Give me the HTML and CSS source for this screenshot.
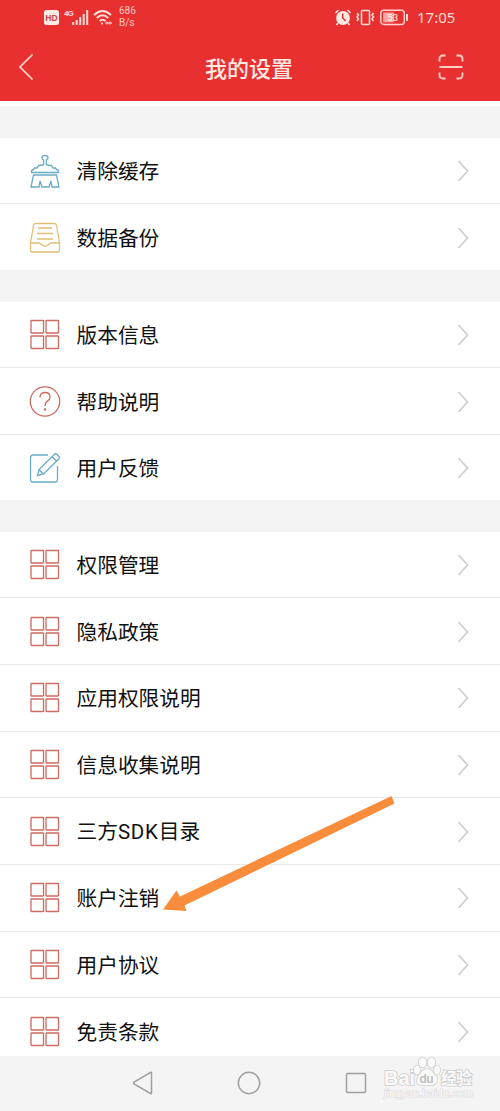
FILE: index.html
```html
<!DOCTYPE html>
<html lang="zh-CN">
<head>
<meta charset="utf-8">
<title>我的设置</title>
<link rel="stylesheet" href="styles.css">
</head>
<body>
<svg class="defs" aria-hidden="true">
  <symbol id="grid" viewBox="0 0 32 32"><rect x="2" y="1.500" width="12.500" height="12.500" rx=".5"/><rect x="17" y="1.500" width="12.500" height="12.500" rx=".5"/><rect x="2" y="17" width="12.500" height="12.500" rx=".5"/><rect x="17" y="17" width="12.500" height="12.500" rx=".5"/></symbol>
  <symbol id="arrow" viewBox="0 0 14 24"><path d="M2.500 2 11.500 12 2.500 22"/></symbol>
</svg>
<main class="phone">
  <header class="header">
    <div class="status">
      <svg class="hd" width="15" height="15" viewBox="0 0 15 15"><rect width="15" height="15" rx="2.500" fill="#ffeae5"/><text x="7.500" y="11" text-anchor="middle" class="hd-text">HD</text></svg>
      <svg class="signal" width="25" height="18" viewBox="0 0 25 18"><text x="0" y="8" class="net-text">4G</text><path d="M9.200 14v3M12.700 12v5M16.200 9v8M19.700 6v11M23.200 2v15" stroke="#ffdcd6" stroke-width="2"/></svg>
      <svg class="wifi" width="21" height="17" viewBox="0 0 21 17" fill="none" stroke="#ffdfd9" stroke-width="2"><path d="M1 6Q9.500-2 18 6M3.800 9Q9.500 3.500 15.200 9M6.500 12Q9.500 9.500 12.500 12"/><circle cx="9" cy="14.500" r="1" fill="#ffdfd9" stroke="none"/><path d="M12 14h7M14 12.500v3M17 12.500v3" stroke-width="1"/></svg>
      <div class="speed"><span>686</span><span>B/s</span></div>
      <div class="status-right">
        <svg width="18" height="17" viewBox="0 0 18 17"><circle cx="9" cy="9" r="6.900" fill="#ffeae5"/><path d="m1.500 4 3-3M13.500 1l3 3M4 14l-1.500 2M14 14l1.500 2" stroke="#ffeae5" stroke-width="1.500"/><path d="M8.700 4.500V9l3 3" fill="none" stroke="#e93030" stroke-width="1.500"/></svg>
        <svg class="vibrate" width="19" height="17" viewBox="0 0 19 17" fill="none" stroke="#ffdfd9" stroke-width="1.500"><rect x="5.500" y="1.500" width="8" height="14" rx="1"/><path d="m1 4 1.500 2L1 8l1.500 2L1 12M17.500 4 16 6l1.500 2-1.500 2 1.500 2"/></svg>
        <svg class="battery" width="29" height="17" viewBox="0 0 29 17"><rect x=".8" y="1.300" width="23.500" height="14.200" rx="3" fill="none" stroke="#ffd4ce" stroke-width="1.400"/><rect x="3" y="3.500" width="11" height="9.800" fill="#f7a6a0"/><path d="M27 5v7" stroke="#ffd4ce" stroke-width="2"/><text x="12.700" y="12.300" text-anchor="middle" class="battery-text">53</text></svg>
        <span class="time">17:05</span>
      </div>
    </div>
    <div class="titlebar">
      <svg width="16" height="28" viewBox="0 0 16 28" fill="none" stroke="#ffd9c9" stroke-width="1.700"><path d="M14.500 1.500 2 14l12.500 12.500"/></svg>
      <h1>我的设置</h1>
      <svg width="26" height="26" viewBox="0 0 26 26" fill="none" stroke="#ffcfc4" stroke-width="1.800"><path d="M1.500 7.500V5q0-3.500 3.500-3.500h2.500M18.500 1.500H21q3.500 0 3.500 3.500v2.500M1.500 18.500V21q0 3.500 3.500 3.500h2.500M18.500 24.500H21q3.500 0 3.500-3.500v-2.500M1.500 13h23"/></svg>
    </div>
  </header>
  <section class="group first">
    <div class="row"><svg class="icon blue" viewBox="0 0 32 34"><path d="M13 3.500q0-2 3-2t3 2q0 1.500-1.600 2.500v4.500q1 1 5.100 1l1.500 2.500h2.500q.5 2 3 2.500v2H2.500v-2q2.500-.5 3-2.500H8l1.500-2.500q4.100 0 5.100-1V6Q13 5 13 3.500ZM4.500 21 2 33h8l1-6 2 6h7l2-6 1 6h7l-2.500-12Z"/></svg><span>清除缓存</span><svg class="chevron"><use href="#arrow"/></svg></div>
    <div class="row"><svg class="icon yellow" viewBox="0 0 32 32"><path d="M1.500 21 4.500 3.500Q4.800 1.500 6.500 1.500h19q1.700 0 2 2L30.500 21M9 6h14M8 11.500h16M8 17h16M1.500 21h8.500q1 0 1.800 1.200L16 24.500l4.200-2.300Q21 21 22 21h8.500v7q0 2-2 2h-25q-2 0-2-2z"/></svg><span>数据备份</span><svg class="chevron"><use href="#arrow"/></svg></div>
  </section>
  <section class="group second">
    <div class="row"><svg class="icon red"><use href="#grid"/></svg><span>版本信息</span><svg class="chevron"><use href="#arrow"/></svg></div>
    <div class="row"><svg class="icon red" viewBox="0 0 32 32"><circle cx="16" cy="15.500" r="14.700"/><path d="M11 11.500q0-5 5-5t5 4.500q0 2.500-2.800 4.400Q16 16.900 16 20"/><circle cx="16" cy="23.500" r=".6"/></svg><span>帮助说明</span><svg class="chevron"><use href="#arrow"/></svg></div>
    <div class="row"><svg class="icon blue" viewBox="0 0 32 32"><path d="M19 3H4Q1.500 3 1.500 5.500v22Q1.500 30 4 30h22q2.500 0 2.500-2.500V14M8.500 23.500l1.600-6L25.500 2.200q1.200-1 2.500.1L30 4.500q1 1.200 0 2.300L14.500 22zM10 17.500l4.500 4.500M23 4.800l4.500 4.500"/></svg><span>用户反馈</span><svg class="chevron"><use href="#arrow"/></svg></div>
  </section>
  <section class="group third">
    <div class="row"><svg class="icon red"><use href="#grid"/></svg><span>权限管理</span><svg class="chevron"><use href="#arrow"/></svg></div>
    <div class="row"><svg class="icon red"><use href="#grid"/></svg><span>隐私政策</span><svg class="chevron"><use href="#arrow"/></svg></div>
    <div class="row"><svg class="icon red"><use href="#grid"/></svg><span>应用权限说明</span><svg class="chevron"><use href="#arrow"/></svg></div>
    <div class="row"><svg class="icon red"><use href="#grid"/></svg><span>信息收集说明</span><svg class="chevron"><use href="#arrow"/></svg></div>
    <div class="row"><svg class="icon red"><use href="#grid"/></svg><span>三方<span class="latin">SDK</span>目录</span><svg class="chevron"><use href="#arrow"/></svg></div>
    <div class="row"><svg class="icon red"><use href="#grid"/></svg><span>账户注销</span><svg class="chevron"><use href="#arrow"/></svg></div>
    <div class="row"><svg class="icon red"><use href="#grid"/></svg><span>用户协议</span><svg class="chevron"><use href="#arrow"/></svg></div>
    <div class="row"><svg class="icon red"><use href="#grid"/></svg><span>免责条款</span><svg class="chevron"><use href="#arrow"/></svg></div>
  </section>
  <nav class="nav">
    <svg width="21" height="24" viewBox="0 0 21 24"><path d="M19.500 1.500v21q0 .5-1 0L2 13q-1-1 0-2l16.500-9.500q1-.5 1 0Z"/></svg>
    <svg width="24" height="24" viewBox="0 0 24 24"><circle cx="12" cy="12" r="10.700"/></svg>
    <svg width="22" height="22" viewBox="0 0 22 22"><rect x="1.500" y="1.500" width="19" height="19" rx="1"/></svg>
  </nav>
  <svg class="pointer" width="234" height="120" viewBox="0 0 234 120"><path d="M230.500 0 233.500 7.500 23.500 109.500 25.500 115 2 113.500 15.500 94.500 19 100.500z" fill="#f98d3c"/></svg>
  <svg class="watermark" width="96" height="58" viewBox="0 0 96 58">
    <text x="2" y="32" textLength="31" class="mark logo">Bai</text>
    <g class="mark"><ellipse cx="35" cy="17" rx="3" ry="4.500"/><ellipse cx="40.500" cy="9.500" rx="3.800" ry="5"/><ellipse cx="49.500" cy="9.500" rx="3.800" ry="5"/><ellipse cx="55" cy="17" rx="3" ry="4.500"/><path d="M45 16q4 0 6 4 5 4 4 8t-5 4H40q-5 0-5-4t4-8q2-4 6-4Z"/></g>
    <text x="37.500" y="30" textLength="14" class="du">du</text><text x="59" y="31" textLength="31" class="mark cn">经验</text>
    <text x="2" y="44" textLength="89" class="mark url">jingyan.baidu.com</text>
  </svg>
</main>
</body>
</html>
```
FILE: styles.css
```css
* { box-sizing: border-box; }
body { margin: 0; background: #fff; font-family: "Noto Sans CJK SC", sans-serif; }
svg { display: block; flex: none; }
.defs { position: absolute; width: 0; height: 0; }
.phone { position: relative; width: 500px; height: 1111px; overflow: hidden; background: #f4f4f4; }
.header { height: 106px; background: #e93030; border-bottom: 5px solid #fefefe; }
.status { display: flex; height: 35px; padding: 0 45px 0 44px; align-items: center; }
.hd-text { font: bold 8.500px "Liberation Sans", sans-serif; fill: #cf4545; }
.signal { margin: -2px 0 0 5px; }
.net-text { font: bold 8px "Liberation Sans", sans-serif; fill: #ffdcd6; letter-spacing: -1px; }
.wifi { margin-left: 4px; }
.speed { display: flex; flex-direction: column; margin: -1px 0 0 5px; font: 10px/12px Roboto, sans-serif; color: #ffcac3; }
.status-right { display: flex; align-items: center; margin-left: auto; }
.vibrate { margin-left: 4px; }
.battery { margin-left: 5px; }
.battery-text { font: 9.500px Roboto, sans-serif; fill: #fff; }
.time { width: 38px; margin: -2px 0 0 8px; font: 15px/20px "Noto Sans", sans-serif; color: #ffdcd6; white-space: nowrap; }
.titlebar { display: flex; height: 64px; padding: 0 36px 0 18px; align-items: center; justify-content: space-between; }
.titlebar h1 { margin: 0 0 0 26px; font: 500 22px/30px KaiTi, STKaiti, "Noto Sans CJK SC", sans-serif; color: #ffe9e3; }
.group { overflow: hidden; background: #fff; }
.first { height: 132.500px; margin-top: 31.500px; }
.second { height: 198.500px; margin-top: 31.500px; }
.third { height: 524.400px; margin-top: 31.600px; }
.row { display: flex; height: 66.700px; padding: 1px 30px 0 29px; align-items: center; border-bottom: 1px solid #e9e9e9; }
.row:last-child { border-bottom-color: transparent; }
.row > span { margin: -2px 0 0 15.500px; font-size: 20.700px; line-height: 30px; color: #111; }
.latin { font-family: Roboto, sans-serif; font-size: 20.500px; letter-spacing: .8px; }
.icon { width: 32px; height: 34px; fill: none; stroke-width: 1.300; }
.red { stroke: #cf6a60; }
.blue { stroke: #68abc8; }
.yellow { stroke: #e2bd76; }
.chevron { width: 14px; height: 24px; margin-left: auto; fill: none; stroke: #cfcfcf; stroke-width: 1.800; }
.nav { display: flex; height: 55px; padding: 0 133px 0 132px; align-items: center; justify-content: space-between; fill: none; stroke: #a0a0a0; stroke-width: 1.500; }
.pointer { position: absolute; left: 161px; top: 796px; }
.watermark { position: absolute; left: 382px; top: 1053px; }
.mark { fill: #fafafa; stroke: #cdcdcd; stroke-width: 1.600; paint-order: stroke; }
.logo { font: bold 20px "Liberation Sans", sans-serif; }
.du { font: bold 12px "Liberation Sans", sans-serif; fill: #c0c0c0; }
.cn { font: bold 16px "Noto Sans CJK SC", sans-serif; }
.url { font: 11px "Liberation Sans", sans-serif; stroke: #dadada; stroke-width: 1; }
```
